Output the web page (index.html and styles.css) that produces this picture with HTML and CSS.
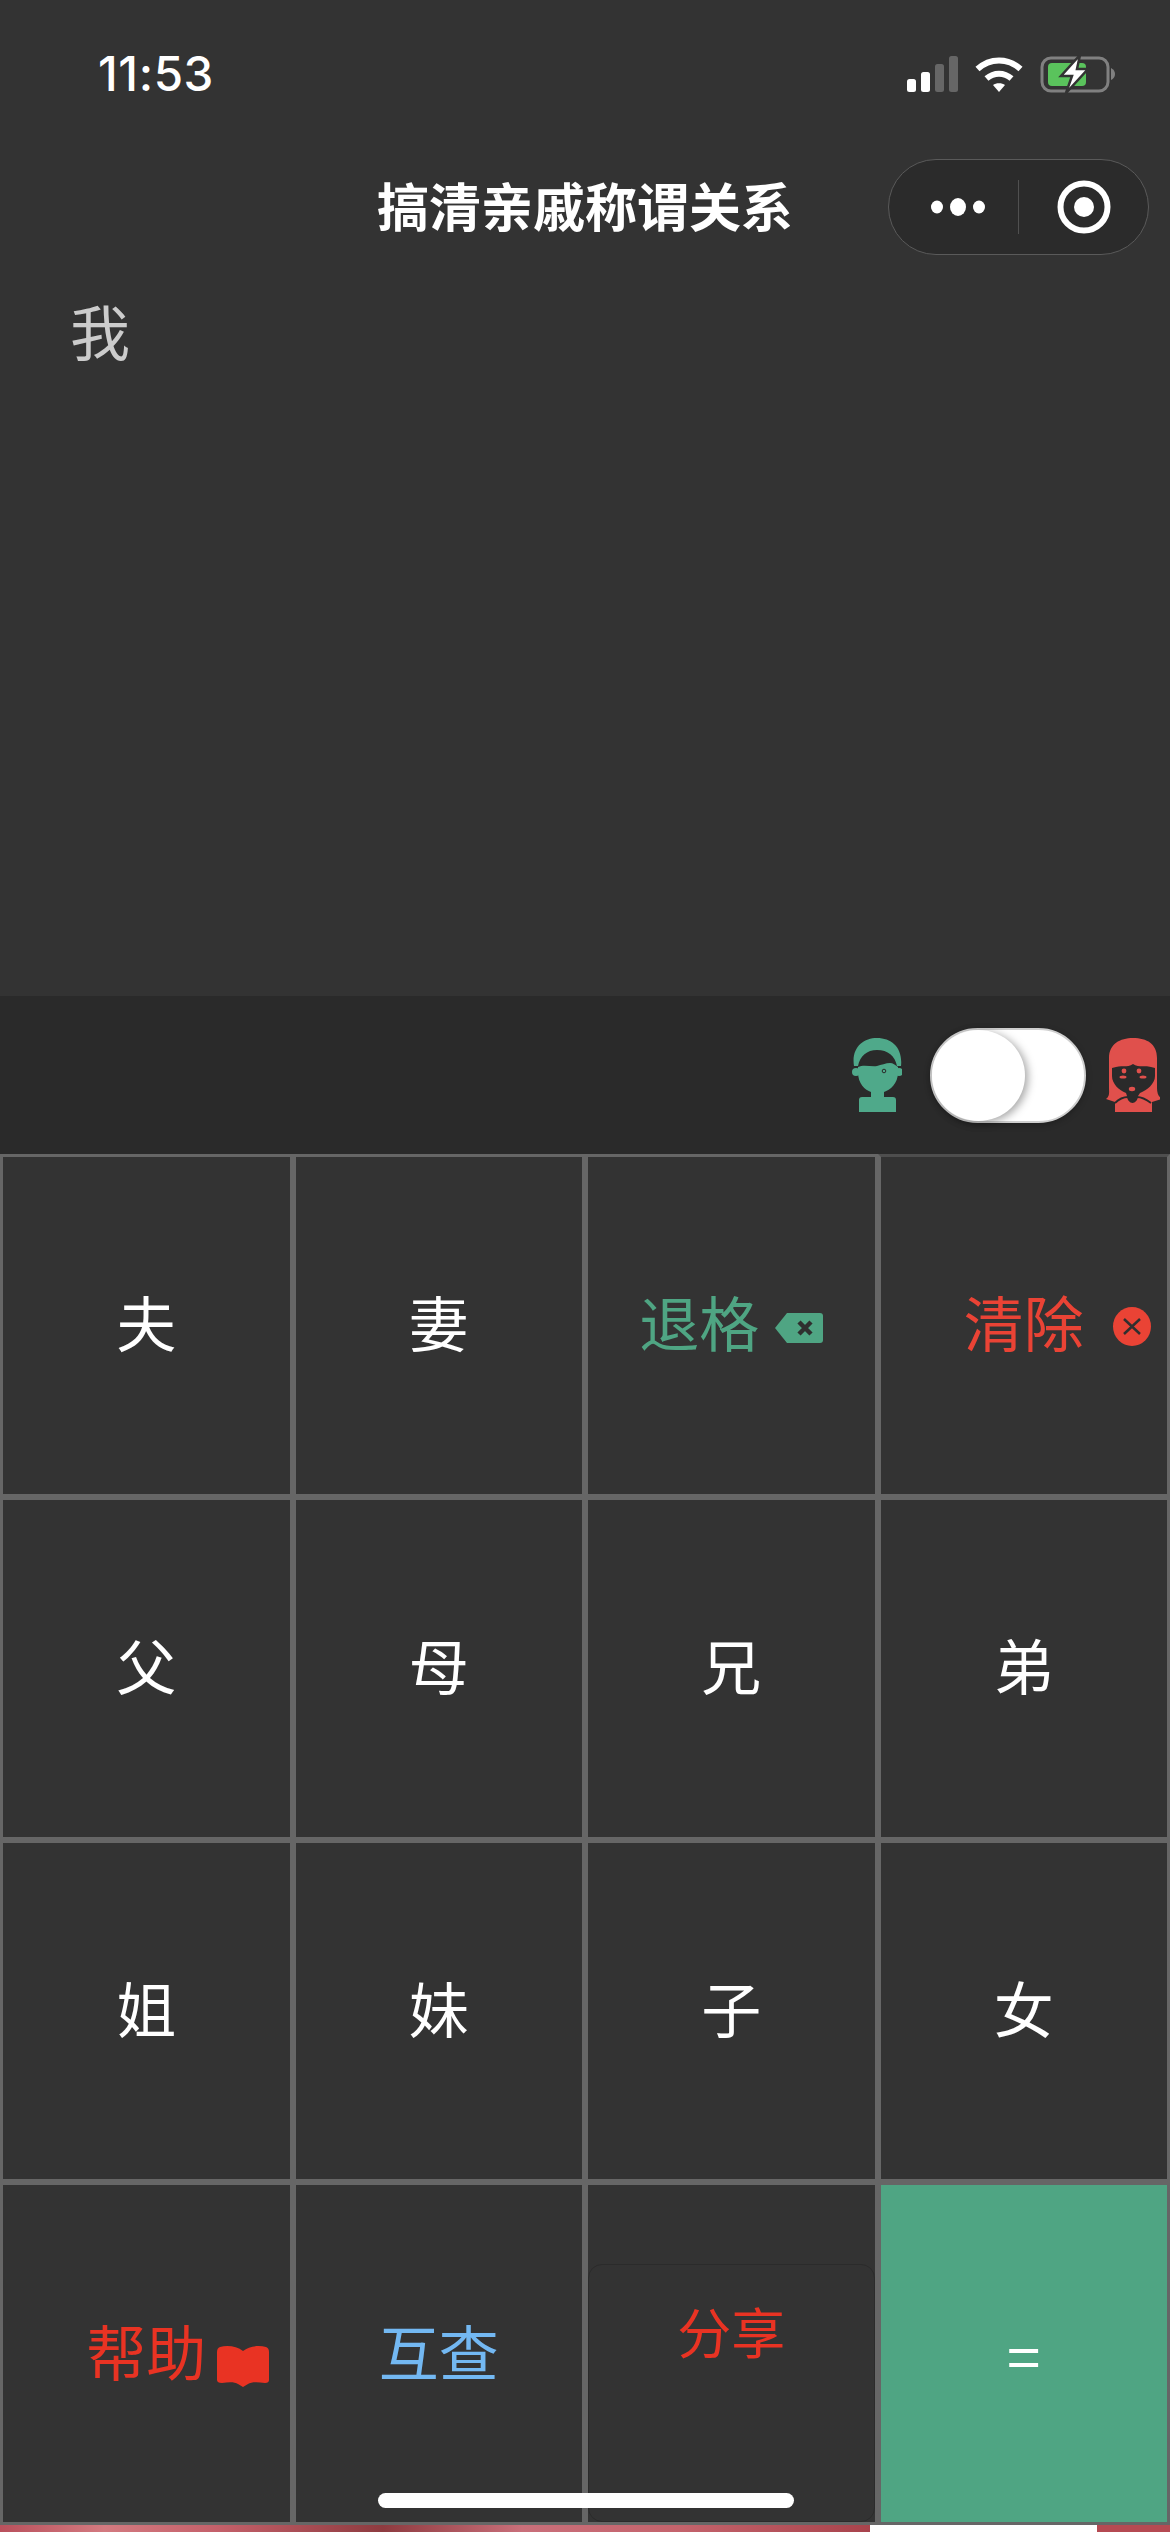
FILE: index.html
```html
<!DOCTYPE html>
<html lang="zh-CN">
<head>
<meta charset="utf-8">
<title>搞清亲戚称谓关系</title>
<link rel="stylesheet" href="styles.css">
</head>
<body>
<div class="page">
  <header class="status">
    <span class="time">11:53</span>
    <div class="status-icons">
      <svg class="signal" width="51" height="36" viewBox="0 0 51 36"><rect x="0" y="23" width="9" height="13" rx="2.5" fill="#fff"/><rect x="14" y="16" width="9" height="20" rx="2.5" fill="#fff"/><rect x="28" y="8" width="9" height="28" rx="2.5" fill="#666"/><rect x="42" y="0" width="9" height="36" rx="2.5" fill="#666"/></svg>
      <svg class="wifi" width="48" height="36" viewBox="0 0 48 36"><path d="M2.5 13 C15 1.5 33 1.5 45.5 13" fill="none" stroke="#fff" stroke-width="6"/><path d="M11.500 22.500 C19 16 29 16 36.500 22.500" fill="none" stroke="#fff" stroke-width="6"/><path d="M18 29 C21 26.500 27 26.500 30 29 L24 36 Z" fill="#fff"/></svg>
      <svg class="battery" width="76" height="38" viewBox="0 0 76 38"><rect x="2" y="3" width="66" height="33" rx="9" fill="none" stroke="#808080" stroke-width="3"/><rect x="8" y="8" width="38" height="23" rx="4" fill="#5ac35c"/><path d="M71 13 Q75 15 75 19 Q75 23 71 25Z" fill="#808080"/><path d="M40 0 L21 21 H32 L26 38 L48 14 H37 Z" fill="#fff" stroke="#333" stroke-width="2.500"/></svg>
    </div>
  </header>
  <nav class="nav">
    <span class="nav-side"></span>
    <h1 class="title">搞清亲戚称谓关系</h1>
    <div class="nav-side nav-right">
      <div class="capsule">
        <svg class="cap-icon" width="60" height="24" viewBox="0 0 60 24"><ellipse cx="9" cy="12" rx="6" ry="6.500" fill="#fff"/><ellipse cx="30" cy="12" rx="8" ry="9" fill="#fff"/><ellipse cx="51" cy="12" rx="6" ry="6.500" fill="#fff"/></svg>
        <span class="cap-line"></span>
        <svg class="cap-icon" width="54" height="54" viewBox="0 0 54 54"><circle cx="27" cy="27" r="23.500" fill="none" stroke="#fff" stroke-width="6"/><circle cx="27" cy="27" r="10" fill="#fff"/></svg>
      </div>
    </div>
  </nav>
  <main class="display"><span class="expr">我</span></main>
  <section class="toolbar">
    <svg class="avatar-m" width="50" height="75" viewBox="22 15 50 75">
      <path d="M24 44 C21 26 33 16 47 16 C62 16 73 26 71 44 L67 44 C65 34 58 28 47 28 C37 28 30 34 28 44 Z" fill="#4fa98a"/>
      <circle cx="26" cy="50" r="4" fill="#4fa98a"/><circle cx="69" cy="50" r="4" fill="#4fa98a"/>
      <path d="M28 45 C34 42 41 45 47 44 C51 43 56 41 60 41 C63 41 65 43 68 45 V50 C68 62 60 68 54 70 V75 H63 Q66 75 66 78 V90 H29 V78 Q29 75 32 75 H41 V70 C35 68 28 62 28 50 Z" fill="#4fa98a"/>
      <circle cx="54" cy="49" r="1.800" fill="none" stroke="#2a2a2a" stroke-width="1"/>
    </svg>
    <div class="toggle"><span class="knob"></span></div>
    <svg class="avatar-f" width="54" height="75" viewBox="16 15 54 75">
      <path d="M19 36 C19 22 30 16 43 16 C57 16 67 22 67 36 V66 C67 72 69 75 72 77 L62 80 V90 H25 V80 L16 77 C20 74 19 70 19 66 Z" fill="#e0504c"/>
      <path d="M22 46 L26 45 C31 43 37 46 43 42 C49 46 56 43 61 45 L65 46 V54 C65 62 57 68 50 71 L48 74 C48 78 45 81 42.500 81 C40 81 37 78 37 74 L36 71 C29 68 22 62 22 54 Z" fill="#2a2a2a"/>
      <path d="M38 75 C33 75 28 78 25 81 M47 75 C52 75 57 78 61 81" fill="none" stroke="#2a2a2a" stroke-width="1.800"/>
      <circle cx="34" cy="49" r="2.400" fill="#e0504c"/><circle cx="49" cy="49" r="2.400" fill="#e0504c"/>
      <ellipse cx="33" cy="55" rx="3.500" ry="1.600" fill="#e0504c"/><ellipse cx="53" cy="55" rx="3.500" ry="1.600" fill="#e0504c"/>
      <ellipse cx="42" cy="67" rx="3.200" ry="2.200" fill="#e0504c"/>
    </svg>
  </section>
  <section class="keys">
    <button class="key">夫</button>
    <button class="key">妻</button>
    <button class="key key-green"><span>退格</span>
      <svg class="del-icon" width="48" height="30" viewBox="0 0 48 30"><path d="M12 0 H45 Q48 0 48 3 V27 Q48 30 45 30 H12 L0 15 Z" fill="#4fa583"/><path d="M24 9 L36 21 M36 9 L24 21" stroke="#2f2f2f" stroke-width="4.500"/></svg>
    </button>
    <button class="key key-red key-top-dim"><span class="keytext">清除
      <svg class="clear-icon" width="38" height="39" viewBox="0 0 38 39"><ellipse cx="19" cy="19.500" rx="19" ry="19.500" fill="#ea4335"/><path d="M11 12 L27 27 M27 12 L11 27" stroke="#2f2f2f" stroke-width="2.500"/></svg></span>
    </button>
    <button class="key">父</button>
    <button class="key">母</button>
    <button class="key">兄</button>
    <button class="key">弟</button>
    <button class="key">姐</button>
    <button class="key">妹</button>
    <button class="key">子</button>
    <button class="key">女</button>
    <button class="key key-help"><span class="keytext">帮助
      <svg class="book-icon" width="52" height="42" viewBox="0 0 52 42"><path d="M3 2 C10 0 20 1 26 6 C32 1 42 0 49 2 Q52 3 52 7 V35 Q52 38 48 38 C40 37 34 37 31 39 L26 42 L21 39 C18 37 12 37 5 38 Q0 38 0 35 V7 Q0 3 3 2 Z" fill="#e93323"/></svg></span>
    </button>
    <button class="key key-blue">互查</button>
    <div class="key key-share"><button class="share-btn">分享</button></div>
    <button class="key key-eq">=</button>
  </section>
  <div class="photo-strip"><span class="strip-red"></span><span class="strip-white"></span><span class="strip-end"></span></div>
  <span class="home-bar"></span>
</div>
</body>
</html>
```
FILE: styles.css
```css
* { box-sizing: border-box; }
html, body { margin: 0; padding: 0; background: #333; }
body { font-family: "Noto Sans CJK SC", "Noto Sans", sans-serif; }
.page {
  position: relative;
  width: 1170px;
  height: 2532px;
  display: flex;
  flex-direction: column;
  overflow: hidden;
  background: #333;
  color: #fff;
}
.status {
  height: 148px;
  flex: none;
  display: flex;
  align-items: center;
  justify-content: space-between;
  padding: 0 54px 0 98px;
}
.time {
  font-family: Inter, Roboto, sans-serif;
  font-size: 47.5px;
  font-weight: 500;
  letter-spacing: 0.6px;
  line-height: 54px;
}
.status-icons { display: flex; align-items: center; gap: 17px; }
.nav {
  height: 118px;
  flex: none;
  display: grid;
  grid-template-columns: 1fr auto 1fr;
  align-items: center;
}
.title {
  margin: -4px 0 0;
  font-size: 52px;
  font-weight: 700;
  line-height: 70px;
  color: #fff;
}
.nav-right { display: flex; justify-content: flex-end; padding-right: 21px; }
.capsule {
  width: 261px;
  height: 96px;
  border: 1.5px solid #5a5a5a;
  border-radius: 48px;
  background: #2b2b2b;
  display: flex;
  align-items: center;
  padding-left: 39px;
}
.cap-line { width: 1px; height: 54px; background: #505050; margin: 0 38px 0 30px; }
.display {
  flex: 1;
  padding: 24px 0 0 70px;
}
.expr { font-size: 60px; line-height: 80px; color: #ccc; display: block; }
.toolbar {
  height: 158px;
  flex: none;
  background: #2a2a2a;
  display: flex;
  align-items: center;
  padding: 0 10px 0 852px;
}
.avatar-m { flex: none; margin-top: -2px; }
.avatar-f { flex: none; margin-left: 20px; margin-top: -2px; }
.toggle {
  width: 156px;
  height: 95px;
  margin-left: 28px;
  border-radius: 48px;
  background: #fff;
  border: 2px solid #cfcfcf;
  box-shadow: 0 2px 6px rgba(0,0,0,.25);
  display: flex;
  align-items: center;
}
.knob {
  width: 93px;
  height: 91px;
  border-radius: 50%;
  background: #fff;
  box-shadow: 3px 2px 9px rgba(0,0,0,.35);
}
.keys {
  flex: none;
  height: 1371px;
  display: grid;
  grid-template-columns: repeat(4, 292.5px);
  grid-template-rows: repeat(4, 342.75px);
}
.key {
  margin: 0;
  padding: 0 0 8px;
  border: 3px solid #666;
  background: #333;
  color: #fff;
  font-family: inherit;
  font-size: 60px;
  line-height: 1;
  display: flex;
  align-items: center;
  justify-content: center;
}
.key-green { color: #4fa583; gap: 16px; }
.key-red { color: #ea4335; }
.key-top-dim { border-top-color: #4e4e4e; }
.key-help { color: #e93323; }
.key-blue { color: #73b8f2; }
.key-eq { background: #4fa583; color: #fff; padding-bottom: 0; }
.keytext { position: relative; display: block; }
.del-icon { flex: none; margin-top: 14px; }
.clear-icon { position: absolute; left: 149px; top: 16px; }
.book-icon { position: absolute; left: 131px; top: 25px; }
.key-share { align-items: flex-end; justify-content: stretch; padding: 0; }
.share-btn {
  width: 100%;
  height: 258px;
  margin: 0;
  padding: 39px 0 0;
  border: 1px solid #2b2b2b;
  border-radius: 14px;
  background: #333;
  color: #e93323;
  font-family: inherit;
  font-size: 54px;
  line-height: 1;
  display: flex;
  align-items: flex-start;
  justify-content: center;
}
.photo-strip { flex: none; height: 7px; display: flex; }
.strip-red {
  width: 870px;
  background: linear-gradient(90deg, #b9505c 0, #d37a80 12%, #c4606a 25%, #8e3b40 44%, #c96f7a 60%, #c4636c 78%, #a8434c 100%);
}
.strip-white { width: 227px; background: #fff; }
.strip-end { flex: 1; background: #b54a52; }
.home-bar {
  position: absolute;
  left: 378px;
  top: 2493px;
  width: 416px;
  height: 15px;
  border-radius: 8px;
  background: #fff;
}
```
